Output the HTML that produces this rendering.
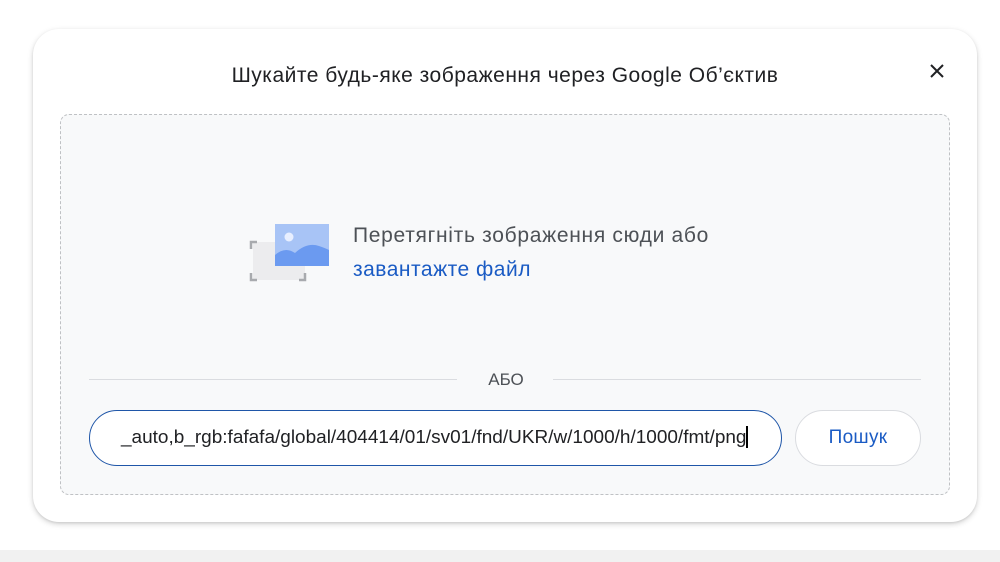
<!DOCTYPE html>
<html><head><meta charset="utf-8"><style>
*{margin:0;padding:0;box-sizing:border-box}
body{width:1000px;height:562px;background:#fff;position:relative;overflow:hidden;font-family:"Liberation Sans",Arial,sans-serif}
.band{position:absolute;left:0;top:550px;width:1000px;height:12px;background:#f1f1f1}
.card{position:absolute;left:33px;top:29px;width:944px;height:493px;background:#fff;border-radius:26px;box-shadow:0 2px 6px rgba(0,0,0,.18),0 1px 2px rgba(0,0,0,.08)}
.title{position:absolute;left:0;width:944px;top:35px;text-align:center;font-size:21px;letter-spacing:0.5px;color:#202124}
.drop{position:absolute;left:27px;top:85px;width:890px;height:381px;background:#f8f9fa;border:1px dashed #bfc1c4;border-radius:9px}
.t1{position:absolute;left:292px;top:109px;font-size:21px;letter-spacing:0.7px;color:#4d5156}
.t2{position:absolute;left:292px;top:143px;font-size:21px;letter-spacing:0.5px;color:#1a5bc4}
.line{position:absolute;top:264px;height:1px;background:#dadce0}
.abo{position:absolute;left:0;width:890px;text-align:center;top:255px;font-size:17px;color:#4d5156}
.inp{position:absolute;left:28px;top:295px;width:693px;height:56px;border:1.5px solid #1f56a8;border-radius:28px;background:#fff;overflow:hidden}
.inp span{position:absolute;left:31px;top:16px;font-size:18px;color:#202124;white-space:nowrap;transform-origin:left;transform:scaleX(1.054)}
.caret{position:absolute;left:656px;top:15px;width:1.5px;height:22px;background:#000}
.btn{position:absolute;left:734px;top:295px;width:126px;height:56px;border:1px solid #dadce0;border-radius:28px;background:#fff;text-align:center;line-height:54px;font-size:19px;letter-spacing:0.3px;color:#1a5bc4}
</style></head><body>
<div class="card">
<div class="title">Шукайте будь-яке зображення через Google Об’єктив</div>
<svg width="14" height="14" viewBox="0 0 14 14" style="left:897px;top:35px;position:absolute"><path d="M1 1L13 13M13 1L1 13" stroke="#202124" stroke-width="2"/></svg>
<div class="drop">
<svg style="position:absolute;left:188px;top:107px" width="82" height="62" viewBox="0 0 82 62">
<rect x="4" y="20" width="52" height="38" fill="#ececee"/>
<path d="M2 27V20H8M2 51V58H8M50 58H56V51" stroke="#a8aaae" stroke-width="2.5" fill="none"/>
<rect x="26" y="2" width="54" height="42" fill="#a8c4f6"/>
<circle cx="40" cy="15" r="4.5" fill="#e8efff"/>
<path d="M26 33Q36 24 46 31Q58 20 70 24Q76 26 80 28V44H26Z" fill="#6b9af0"/>
</svg>
<div class="t1">Перетягніть зображення сюди або</div>
<div class="t2">завантажте файл</div>
<div class="line" style="left:28px;width:368px"></div>
<div class="line" style="left:492px;width:368px"></div>
<div class="abo">АБО</div>
<div class="inp"><span>_auto,b_rgb:fafafa/global/404414/01/sv01/fnd/UKR/w/1000/h/1000/fmt/png</span><div class="caret"></div></div>
<div class="btn">Пошук</div>
</div>
</div>
<div class="band"></div>
</body></html>
